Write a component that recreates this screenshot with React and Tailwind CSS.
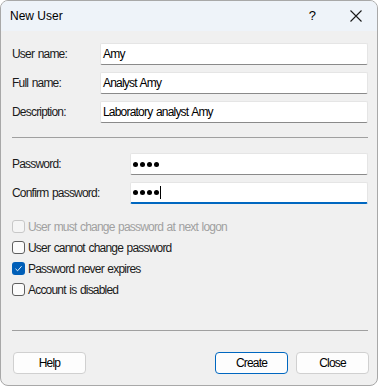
import React from "react";

const bodyFont = { fontFamily: '"Liberation Sans", Arial, sans-serif' };

function Field({ label, value, labelW, inputW, mt = "" }) {
  return (
    <div className={`flex items-center h-[22px] ${mt}`}>
      <div className={`${labelW} text-[12px] text-[#1a1a1a] leading-none`}>{label}</div>
      <div className={`${inputW} h-[22px] bg-white border border-[#e5e5e5] border-b-[#8a8a8a] rounded-[2px] flex items-center pl-[2px] text-[12px] text-black leading-none`}>
        {value}
      </div>
    </div>
  );
}

function Dots() {
  return (
    <div className="flex items-center gap-[2px]">
      <span className="w-[5px] h-[5px] rounded-full bg-black" />
      <span className="w-[5px] h-[5px] rounded-full bg-black" />
      <span className="w-[5px] h-[5px] rounded-full bg-black" />
      <span className="w-[5px] h-[5px] rounded-full bg-black" />
    </div>
  );
}

function Check({ label, state }) {
  let box;
  if (state === "checked") {
    box = (
      <div className="w-[13px] h-[13px] rounded-[3px] bg-[#005fb8] flex items-center justify-center">
        <svg width="9" height="9" viewBox="0 0 9 9">
          <path d="M1.5 4.8 L3.6 6.8 L7.6 2.2" stroke="white" strokeWidth="0.9" fill="none" />
        </svg>
      </div>
    );
  } else if (state === "disabled") {
    box = <div className="w-[13px] h-[13px] rounded-[3px] border border-[#c8c8c8] bg-[#f5f5f5]" />;
  } else {
    box = <div className="w-[13px] h-[13px] rounded-[3px] border border-[#5f5f5f] bg-[#fbfbfb]" />;
  }
  return (
    <div className="flex items-center h-[21px]">
      {box}
      <span className={`ml-[3px] text-[12px] leading-none ${state === "disabled" ? "text-[#a0a0a0]" : "text-[#1a1a1a]"}`}>{label}</span>
    </div>
  );
}

export default function App() {
  return (
    <div className="w-[380px] h-[386px] bg-white" style={bodyFont}>
      <div className="w-[378px] h-[386px] border border-[#a8a8a8] rounded-[8px] overflow-hidden bg-[#f0f0f0] flex flex-col">
        <div className="h-[30px] bg-[#eef3f9] flex items-center shrink-0">
          <span className="ml-[9px] text-[12px] text-black">New User</span>
          <span className="ml-auto text-[13px] text-black mr-[34px]">?</span>
          <svg width="12" height="12" viewBox="0 0 12 12" className="mr-[15px]">
            <path d="M0.5 0.5 L11.5 11.5 M11.5 0.5 L0.5 11.5" stroke="#1a1a1a" strokeWidth="1.1" />
          </svg>
        </div>
        <div className="pl-[11px] flex flex-col tracking-[-0.8px] [word-spacing:1px]">
          <Field mt="mt-[12px]" label="User name:" value="Amy" labelW="w-[88px]" inputW="w-[268px]" />
          <Field mt="mt-[7px]" label="Full name:" value="Analyst Amy" labelW="w-[88px]" inputW="w-[268px]" />
          <Field mt="mt-[7px]" label="Description:" value="Laboratory analyst Amy" labelW="w-[88px]" inputW="w-[268px]" />
          <div className="mt-[14px] w-[356px] h-px bg-[#a0a0a0]" />
          <div className="flex items-center h-[22px] mt-[15px]">
            <div className="w-[118px] text-[12px] text-[#1a1a1a] leading-none">Password:</div>
            <div className="w-[238px] h-[22px] bg-white border border-[#e5e5e5] border-b-[#8a8a8a] rounded-[2px] flex items-center pl-[2px]">
              <Dots />
            </div>
          </div>
          <div className="flex items-center h-[22px] mt-[7px]">
            <div className="w-[118px] text-[12px] text-[#1a1a1a] leading-none">Confirm password:</div>
            <div className="w-[238px] h-[22px] bg-white border border-[#e5e5e5] border-b-2 border-b-[#0067c0] rounded-[2px] flex items-center pl-[2px]">
              <Dots />
              <span className="ml-[1px] w-px h-[13px] bg-black" />
            </div>
          </div>
          <div className="mt-[12px] flex flex-col">
            <Check label="User must change password at next logon" state="disabled" />
            <Check label="User cannot change password" state="unchecked" />
            <Check label="Password never expires" state="checked" />
            <Check label="Account is disabled" state="unchecked" />
          </div>
          <div className="mt-[30px] w-[356px] h-px bg-[#a0a0a0]" />
          <div className="mt-[21px] flex items-center w-[357px]">
            <button className="ml-[1px] w-[73px] h-[22px] bg-[#fdfdfd] border border-[#d0d0d0] rounded-[4px] text-[12px] text-black leading-none">Help</button>
            <button className="ml-auto w-[73px] h-[22px] bg-[#fdfdfd] border border-[#0067c0] rounded-[4px] text-[12px] text-black leading-none">Create</button>
            <button className="ml-[8px] w-[73px] h-[22px] bg-[#fdfdfd] border border-[#d0d0d0] rounded-[4px] text-[12px] text-black leading-none">Close</button>
          </div>
        </div>
      </div>
    </div>
  );
}
